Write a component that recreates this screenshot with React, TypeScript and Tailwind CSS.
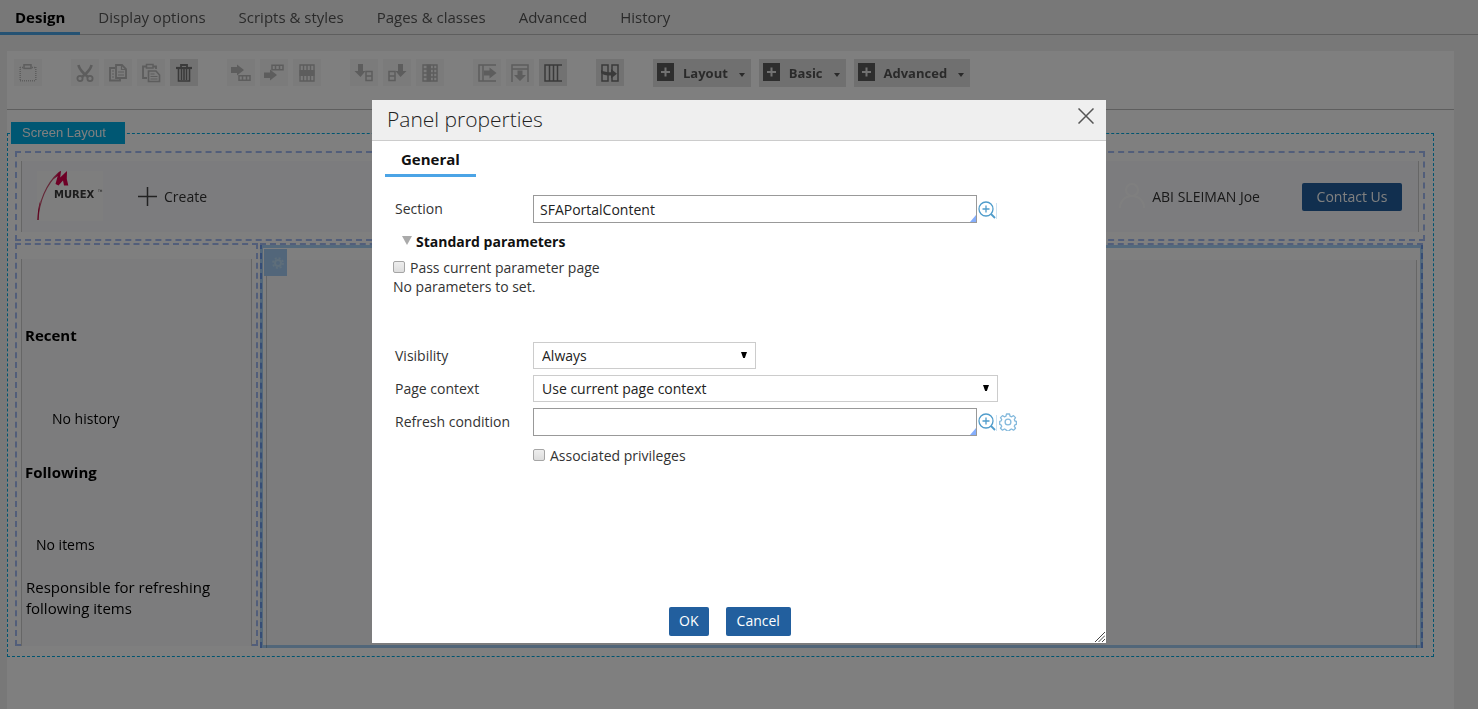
import { useState, type ReactNode } from "react";

const designTabs = ["Design", "Display options", "Scripts & styles", "Pages & classes", "Advanced", "History"];

type Tool = { label: string; icon: ReactNode; active?: boolean };

function Glyph({ children }: { children: ReactNode }) {
  return (
    <svg viewBox="0 0 20 20" className="h-5 w-5" fill="none" stroke="currentColor" strokeWidth="1.5" aria-hidden="true">
      {children}
    </svg>
  );
}

const toolGroups: Tool[][] = [
  [
    {
      label: "Select",
      icon: (
        <Glyph>
          <path d="M2 4.500h3M14 4.500h4M2.200 4v14M17.800 4v14M2 17.800h16" strokeDasharray="1 1" />
          <rect x="6" y="1.800" width="7" height="3.600" />
        </Glyph>
      ),
    },
  ],
  [
    {
      label: "Cut",
      icon: (
        <Glyph>
          <path d="M3.500 2c.5 3 2.500 5.500 5 8l4.500 4M16.500 2c-.5 3-2.500 5.500-5 8L7 14" strokeWidth="2.600" />
          <circle cx="5" cy="15.500" r="2.600" strokeWidth="1.800" />
          <circle cx="15" cy="15.500" r="2.600" strokeWidth="1.800" />
        </Glyph>
      ),
    },
    {
      label: "Copy",
      icon: (
        <Glyph>
          <path d="M7 5H2v12.500h10V15" strokeWidth="1.800" />
          <path d="M8 2h6l4 4v9H8z" strokeWidth="1.800" />
          <path d="M13.500 2v4.500H18M10 9h6M10 12h6M4 8h2M4 11h2M4 14h2" strokeWidth="1.200" />
        </Glyph>
      ),
    },
    {
      label: "Paste",
      icon: (
        <Glyph>
          <path d="M6 3.500H2V15h4M12 3.500h3V6" strokeWidth="1.800" />
          <rect x="5.500" y="1.500" width="6.500" height="3.500" strokeWidth="1.500" />
          <path d="M7.500 8h7.500l3.500 4v6.500H7.500z" strokeWidth="1.600" />
          <path d="M9.500 11h4M9.500 13.500h7M9.500 16h7" strokeWidth="1" />
        </Glyph>
      ),
    },
    {
      label: "Delete",
      active: true,
      icon: (
        <Glyph>
          <path d="M2 5h16" strokeWidth="2.200" />
          <path d="M7 4.500V2h6v2.500" strokeWidth="1.800" />
          <path d="M4.500 6v12h11V6M7.500 6v11M10 6v11M12.500 6v11" strokeWidth="1.600" />
        </Glyph>
      ),
    },
  ],
  [
    {
      label: "Insert row before",
      icon: (
        <Glyph>
          <path d="M0 4h6V1.500l7 5.500-7 5.500V10H0z" fill="currentColor" stroke="none" />
          <path d="M8 12.700h11v4.600H8zM11.500 13v4M15.500 13v4" strokeWidth="1.500" />
        </Glyph>
      ),
    },
    {
      label: "Insert row after",
      icon: (
        <Glyph>
          <path d="M0 9.500h6V6.500l7 5.500-7 5.500V15H0z" fill="currentColor" stroke="none" />
          <path d="M8 2.200h11v4.600H8zM11.500 2.500v4M15.500 2.500v4" strokeWidth="1.500" />
        </Glyph>
      ),
    },
    {
      label: "Select row",
      icon: (
        <Glyph>
          <path d="M3 2h14v16H3zM6.500 2v16M10 2v16M13.500 2v16" strokeWidth="1.400" />
          <path d="M2.500 7h15v6h-15z" fill="currentColor" stroke="none" />
        </Glyph>
      ),
    },
  ],
  [
    {
      label: "Insert column before",
      icon: (
        <Glyph>
          <path d="M4 1h5v7h2.500L6.500 14l-6-6H4z" fill="currentColor" stroke="none" />
          <path d="M12 8.500h6v9h-6zM12 13h6" />
        </Glyph>
      ),
    },
    {
      label: "Insert column after",
      icon: (
        <Glyph>
          <path d="M11 1h5v7h3.500l-6 6-5-6H11z" fill="currentColor" stroke="none" />
          <path d="M2 8.500h6v9H2zM2 13h6" />
        </Glyph>
      ),
    },
    {
      label: "Select column",
      icon: (
        <Glyph>
          <path d="M3 2h14v16H3zM3 6h14M3 10h14M3 14h14M13.500 2v16" strokeWidth="1.400" />
          <path d="M6.500 1.500h4.500v17H6.500z" fill="currentColor" stroke="none" />
        </Glyph>
      ),
    },
  ],
  [
    {
      label: "Expand right",
      icon: (
        <Glyph>
          <path d="M19 2H2v16h17M6 2v16" />
          <path d="M7 7.500h5.500V4.500l7 5.500-7 5.500v-3H7z" fill="currentColor" stroke="none" />
        </Glyph>
      ),
    },
    {
      label: "Expand down",
      icon: (
        <Glyph>
          <path d="M2 19V2h16v17M2 6h16" />
          <path d="M7.500 7.500h5V12h3.500l-6 6-6-6h3.500z" fill="currentColor" stroke="none" />
        </Glyph>
      ),
    },
    {
      label: "Columns",
      active: true,
      icon: (
        <Glyph>
          <path d="M19 2H2v16h17M6.500 2v16M10.500 2v16M14.500 2v16" />
        </Glyph>
      ),
    },
  ],
  [
    {
      label: "Merge cells",
      active: true,
      icon: (
        <Glyph>
          <path d="M2 2h6v16H2zM12 2h6v16h-6z" />
          <path d="M1 7c3 2 6 2.200 10 2.200V6l6 4.700-6 4.800v-3C6 12.500 3 12 1 10z" fill="currentColor" stroke="none" />
        </Glyph>
      ),
    },
  ],
];

function ToolButton({ tool }: { tool: Tool }) {
  return (
    <button
      type="button"
      aria-label={tool.label}
      disabled={!tool.active}
      className={
        tool.active
          ? "flex h-[27px] w-7 items-center justify-center bg-[#e4e4e4] text-[#747474]"
          : "flex h-[27px] w-7 items-center justify-center bg-[#f6f6f6] text-[#bababa]"
      }
    >
      {tool.icon}
    </button>
  );
}

function MenuButton({ label }: { label: string }) {
  return (
    <button
      type="button"
      className="flex h-7 items-center bg-[#e0e0e0] pt-px pr-[6px] pl-1 text-[13px] font-bold text-[#555]"
    >
      <svg viewBox="0 0 17 18" className="-mt-[3px] h-[18px] w-[17px]" aria-hidden="true">
        <rect width="17" height="18" fill="#5c5c5c" />
        <path d="M8.500 4.500v9M4 9h9" stroke="#e4e4e4" strokeWidth="2" />
      </svg>
      <span className="ml-[9px]">{label}</span>
      <svg viewBox="0 0 6 5" className="mt-[3px] ml-[11px] h-[5px] w-[6px]" aria-hidden="true">
        <path d="M0 0h6L3 4z" fill="#555" />
      </svg>
    </button>
  );
}

function MurexLogo() {
  return (
    <svg viewBox="0 0 66 50" className="h-[50px] w-[66px] bg-[#fdfdfd]" role="img" aria-label="Murex">
      <path d="M1 49C2 31 9 13 22 1.500" fill="none" stroke="#c8506f" strokeWidth="1.100" />
      <path d="M.5 49c0-8 1-14 3-20-1 7-2 13-2 20z" fill="#c0003c" />
      <path d="m16 8.500 7-8.500 1 .3-.8 6.200L30 0l-.2 8L31.300 14.500h-4.300l-1-5-4.500 5L18.500 13l2.200-8z" fill="#dc004c" />
      <text x="17" y="27" fontSize="10" fontWeight="bold" fontFamily="DejaVu Sans, sans-serif" fill="#3a3a3a">
        MUREX
      </text>
      <text x="61" y="21" fontSize="3" fontFamily="DejaVu Sans, sans-serif" fill="#2a2a2a">
        TM
      </text>
    </svg>
  );
}

function Workspace() {
  return (
    <div className="flex min-h-screen flex-col bg-[#f1f1f1]">
      <nav className="flex h-[35px] gap-[3px] border-b border-[#bdbdbd] text-[15px]">
        {designTabs.map((tab, i) => (
          <a
            key={tab}
            href="#"
            className={
              i === 0
                ? "-mb-px h-[35px] border-b-[3px] border-[#4ba4e6] px-[15px] leading-[35px] font-bold text-black"
                : "h-[34px] px-[15px] leading-[35px] text-[#555]"
            }
          >
            {tab}
          </a>
        ))}
      </nav>

      <div className="mt-4 mr-6 ml-[7px] flex-1 bg-white">
        <div className="flex h-[59px] items-start gap-[29px] border-b border-[#bdbdbd] pt-2 pl-[7px]">
          {toolGroups.map((group, i) => (
            <div key={i} className="flex gap-[5px]">
              {group.map((tool) => (
                <ToolButton key={tool.label} tool={tool} />
              ))}
            </div>
          ))}
          <div className="flex gap-2">
            <MenuButton label="Layout" />
            <MenuButton label="Basic" />
            <MenuButton label="Advanced" />
          </div>
        </div>

        <div className="relative mt-[23px] mr-5 border border-dashed border-[#00a9e0] pt-[17px] pr-2 pb-2 pl-[7px]">
          <span className="absolute -top-3 left-[3px] h-[22px] bg-[#00aee6] px-[11px] pr-[19px] font-['Liberation_Sans',Arial,sans-serif] text-[13px] leading-[22px] text-white">
            Screen Layout
          </span>

          <header className="border-2 border-dashed border-[#a4bcf4] px-1 pt-2 pb-[7px]">
            <div className="flex items-center border-x border-[#ccc] bg-[#f8f8fc] pt-[10px] pr-4 pb-[11px] pl-[15px] text-[14px] text-[#333]">
              <MurexLogo />
              <button type="button" className="ml-[35px] flex items-center gap-[7px]">
                <svg viewBox="0 0 19 19" className="h-[19px] w-[19px]" stroke="#444" strokeWidth="1.500" aria-hidden="true">
                  <path d="M9.500 0v19M0 9.500h19" />
                </svg>
                Create
              </button>
              <svg
                viewBox="0 0 26 26"
                className="ml-auto h-[26px] w-[26px]"
                fill="none"
                stroke="#fff"
                strokeWidth="2"
                aria-hidden="true"
              >
                <circle cx="13" cy="7" r="6" />
                <path d="M1 25c0-7 5-12 12-12s12 5 12 12" />
              </svg>
              <span className="ml-[7px]">ABI SLEIMAN Joe</span>
              <button
                type="button"
                className="mt-px ml-[42px] h-7 w-[100px] rounded-[2px] bg-[#225f9e] pb-px text-[14px] text-white"
              >
                Contact Us
              </button>
            </div>
          </header>

          <div className="mt-[2px] mr-[2px] flex gap-[2px]">
            <aside className="mb-[2px] w-[243px] shrink-0 border-2 border-dashed border-[#a4bcf4] px-1 pt-[14px]">
              <div className="relative -mb-[2px] border-x border-[#ccc] bg-[#f8f8fa] px-[3px] pt-[66px] pb-[27px] text-[14px] leading-5 text-black">
                <h2 className="text-[15px] font-bold">Recent</h2>
                <p className="mt-16 pl-[27px]">No history</p>
                <h2 className="mt-[33px] text-[15px] font-bold">Following</h2>
                <p className="mt-[53px] pl-[11px]">No items</p>
                <p className="mt-[22px] pl-px text-[15px] leading-[21px]">Responsible for refreshing following items</p>
              </div>
            </aside>
            <main className="relative flex flex-1 flex-col border-2 border-b-0 border-dashed border-[#a4bcf4] px-1 pt-[15px]">
              <div className="flex-1 border-x border-[#ccc] bg-[#f8f8fa]" />
              <div className="absolute -inset-x-[2px] inset-y-0 border-[3px] border-[#a8d2f8] mix-blend-multiply" />
              <span className="absolute top-1 left-[2px] flex h-[27px] w-[23px] items-center justify-center bg-[#a4cdf4]">
                <svg viewBox="0 0 12 12" className="ml-1 h-3 w-3" fill="none" stroke="#bcdcf4" aria-hidden="true">
                  <circle cx="6" cy="6" r="3" strokeWidth="2" />
                  <circle cx="6" cy="6" r="5" strokeWidth="1.800" strokeDasharray="2 1.930" />
                </svg>
              </span>
            </main>
          </div>
        </div>
      </div>
    </div>
  );
}

function ZoomIcon() {
  return (
    <svg viewBox="0 0 19 18" className="h-[18px] w-[19px]" fill="none" stroke="#4f9ccb" aria-hidden="true">
      <circle cx="8" cy="8" r="7" strokeWidth="1.300" />
      <path d="M8 4.500v7M4.500 8h7" strokeWidth="1.300" />
      <path d="m13 13 4 4" strokeWidth="1.800" />
      <path d="M18.500 2v16" stroke="#cfe3f1" strokeWidth="1" />
    </svg>
  );
}

function GearIcon() {
  return (
    <svg viewBox="0 0 18 18" className="h-[18px] w-[18px]" fill="none" stroke="#84b9dc" strokeWidth="1.300" aria-hidden="true">
      <circle cx="9" cy="9" r="2.900" />
      <path
        d="M7.500 1h3l.5 2.100 1.600.7 1.900-1.200 2 2-1.200 1.900.6 1.500 1.500.4v2.900l-1.500.5-.6 1.500 1.200 1.900-2 2-1.900-1.200-1.600.7-.5 1.300h-3L7 16.700l-1.600-.7-1.900 1.200-2-2 1.200-1.900-.7-1.500-1.300-.5V8.400L2 8l.7-1.500-1.200-1.900 2-2 1.900 1.200L7 3.100z"
        strokeLinejoin="round"
      />
    </svg>
  );
}

function SmartInput({ id, value, onChange }: { id: string; value: string; onChange: (v: string) => void }) {
  return (
    <span className="relative flex w-full max-w-[444px]">
      <input
        id={id}
        type="text"
        value={value}
        onChange={(e) => onChange(e.target.value)}
        className="h-7 w-full border border-[#999] bg-white px-[6px] text-[14px] text-[#222] outline-none"
      />
      <svg viewBox="0 0 6 7" className="absolute right-px bottom-px h-[7px] w-[6px]" aria-hidden="true">
        <path d="M6 0v7H0z" fill="#85aefc" />
      </svg>
    </span>
  );
}

function SelectBox({ id, wide, options }: { id: string; wide?: boolean; options: string[] }) {
  return (
    <span className={wide ? "relative flex w-full max-w-[465px]" : "relative flex w-full max-w-[223px]"}>
      <select
        id={id}
        className="h-[27px] w-full appearance-none border border-[#ccc] bg-white px-2 text-[14px] text-[#222] outline-none"
      >
        {options.map((o) => (
          <option key={o}>{o}</option>
        ))}
      </select>
      <svg viewBox="0 0 6 6" className="pointer-events-none absolute top-[10px] right-[9px] h-[6px] w-[6px]" aria-hidden="true">
        <path d="M0 0h6L3.800 6H2.200z" fill="#000" />
      </svg>
    </span>
  );
}

function CheckBox({ label }: { label: string }) {
  return (
    <label className="flex items-center gap-[5px]">
      <input
        type="checkbox"
        className="-mt-[2px] h-3 w-3 appearance-none rounded-[2px] border border-[#a5a5a5] bg-linear-to-b from-[#eee] to-[#ddd] checked:from-[#4ba4e6] checked:to-[#225f9e]"
      />
      {label}
    </label>
  );
}

function PanelDialog({ onClose }: { onClose: () => void }) {
  const [section, setSection] = useState("SFAPortalContent");
  const [condition, setCondition] = useState("");
  return (
    <div className="fixed inset-0 flex items-start justify-center overflow-auto bg-black/50 pt-[100px]">
      <div role="dialog" aria-labelledby="dialog-title" className="relative w-full max-w-[734px] bg-white">
        <div className="flex h-[41px] items-center justify-between border-b border-[#ccc] bg-[#efefef] pr-3 pb-[3px] pl-[15px]">
          <h1 id="dialog-title" className="text-[21px] leading-8 font-light text-[#222]">
            Panel properties
          </h1>
          <button type="button" aria-label="Close" onClick={onClose} className="-mt-[6px]">
            <svg viewBox="0 0 16 16" className="h-4 w-4" stroke="#555" strokeWidth="1.500" aria-hidden="true">
              <path d="m.5.500 15 15M15.500.500l-15 15" />
            </svg>
          </button>
        </div>

        <div className="flex pl-[13px]">
          <a href="#" className="border-b-[3px] border-[#4ba4e6] px-4 pt-2 pb-[5px] text-[15px] leading-5 font-bold text-[#111]">
            General
          </a>
        </div>

        <form className="px-[21px] pt-[18px] text-[14px] leading-[19px] text-[#333]" onSubmit={(e) => e.preventDefault()}>
          <div className="grid grid-cols-[138px_1fr] pl-[2px]">
            <label htmlFor="section" className="leading-[27px]">
              Section
            </label>
            <div className="flex items-center gap-px">
              <SmartInput id="section" value={section} onChange={setSection} />
              <button type="button" aria-label="Open section" className="pt-px">
                <ZoomIcon />
              </button>
            </div>
          </div>

          <h2 className="mt-[9px] flex items-center gap-1 pl-[9px] leading-5 font-bold text-[#111]">
            <svg viewBox="0 0 10 9" className="-mt-[3px] h-[9px] w-[10px]" aria-hidden="true">
              <path d="M0 0h10L5 9z" fill="#aaa" />
            </svg>
            Standard parameters
          </h2>
          <div className="mt-[6px]">
            <CheckBox label="Pass current parameter page" />
            <p>No parameters to set.</p>
          </div>

          <div className="mt-[46px] grid grid-cols-[138px_1fr] gap-y-[6px] pl-[2px]">
            <label htmlFor="visibility" className="leading-[27px]">
              Visibility
            </label>
            <SelectBox id="visibility" options={["Always", "Condition"]} />
            <label htmlFor="context" className="leading-[27px]">
              Page context
            </label>
            <SelectBox id="context" wide options={["Use current page context", "Use clipboard page"]} />
            <label htmlFor="refresh" className="leading-[27px]">
              Refresh condition
            </label>
            <div className="flex items-center gap-px">
              <SmartInput id="refresh" value={condition} onChange={setCondition} />
              <button type="button" aria-label="Open condition">
                <ZoomIcon />
              </button>
              <button type="button" aria-label="Condition settings" className="ml-px">
                <GearIcon />
              </button>
            </div>
          </div>
          <div className="mt-[10px] pl-[140px]">
            <CheckBox label="Associated privileges" />
          </div>
        </form>

        <div className="mt-[142px] flex justify-center gap-[17px] pr-[18px] pb-[7px] text-[14px] text-white">
          <button type="button" onClick={onClose} className="h-[29px] rounded-[2px] bg-[#225f9e] px-[10px] pb-[2px]">
            OK
          </button>
          <button type="button" onClick={onClose} className="h-[29px] rounded-[2px] bg-[#225f9e] px-[11px] pb-[2px]">
            Cancel
          </button>
        </div>
        <svg viewBox="0 0 10 10" className="absolute right-px bottom-px h-[10px] w-[10px]" stroke="#444" aria-hidden="true">
          <path d="M0 10 10 0M3.500 10 10 3.500M7 10l3-3" />
        </svg>
      </div>
    </div>
  );
}

export default function App() {
  const [open, setOpen] = useState(true);
  return (
    <div className="font-['Open_Sans',sans-serif]">
      <Workspace />
      {open && <PanelDialog onClose={() => setOpen(false)} />}
    </div>
  );
}
